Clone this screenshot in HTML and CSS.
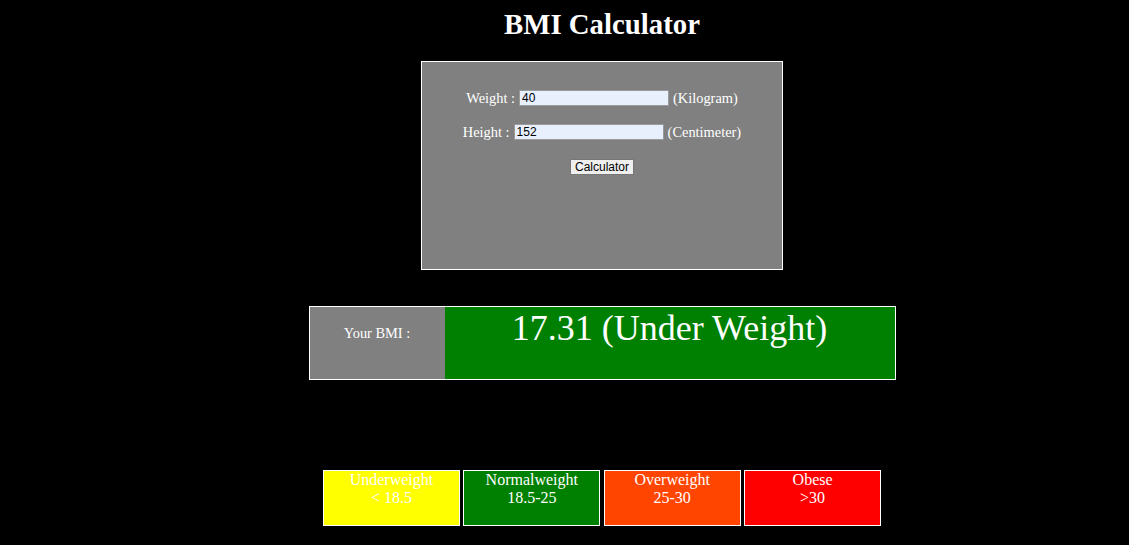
FILE: index.html
```html
<!DOCTYPE html>
<html lang="en">
<head>
<meta charset="utf-8">
<title>BMI Calculator</title>
<link rel="stylesheet" href="styles.css">
</head>
<body>
<main class="page">
  <h1 class="title">BMI Calculator</h1>
  <form class="calc">
    <div class="row">
      <span class="label">Weight :</span>
      <input class="field" type="text" value="40">
      <span class="unit">(Kilogram)</span>
    </div>
    <div class="row">
      <span class="label">Height :</span>
      <input class="field" type="text" value="152">
      <span class="unit">(Centimeter)</span>
    </div>
    <div class="row">
      <button class="btn" type="button">Calculator</button>
    </div>
  </form>
  <section class="result">
    <div class="result-label">Your BMI :</div>
    <div class="result-value">17.31 (Under Weight)</div>
  </section>
  <section class="scale">
    <div class="cat under">Underweight<br>&lt; 18.5</div>
    <div class="cat normal">Normalweight<br>18.5-25</div>
    <div class="cat over">Overweight<br>25-30</div>
    <div class="cat obese">Obese<br>&gt;30</div>
  </section>
</main>
</body>
</html>
```

FILE: styles.css
```css
html, body {
  margin: 0;
  padding: 0;
  background: #000;
}

body {
  font-family: "Liberation Serif", "Times New Roman", serif;
  color: #fff;
  font-size: 14.4px;
}

.page {
  padding-left: 75px;
  display: flex;
  flex-direction: column;
  align-items: center;
}

.title {
  margin: 8px 0 20px;
  font-size: 28.8px;
  font-weight: bold;
  line-height: normal;
}

.calc {
  box-sizing: border-box;
  width: 362px;
  height: 209px;
  background: #808080;
  border: 1px solid #fff;
  padding-top: 28px;
  display: flex;
  flex-direction: column;
  gap: 18px;
}

.row {
  display: flex;
  justify-content: center;
  align-items: center;
  gap: 4px;
  height: 16px;
}

.field {
  box-sizing: border-box;
  width: 150px;
  height: 16px;
  margin: 0;
  padding: 0 2px;
  border: 1px solid #9a9a9a;
  background: #e8f0fe;
  font-family: "Liberation Sans", Arial, sans-serif;
  font-size: 12px;
  color: #000;
}

.btn {
  box-sizing: border-box;
  height: 16px;
  margin: 1px 0 0 0;
  padding: 0 4px;
  border: 1px solid #767676;
  border-radius: 0;
  background: #efefef;
  font-family: "Liberation Sans", Arial, sans-serif;
  font-size: 12px;
  line-height: 12px;
  color: #000;
}

.result {
  margin-top: 36px;
  box-sizing: border-box;
  width: 587px;
  height: 74px;
  border: 1px solid #fff;
  display: flex;
}

.result-label {
  width: 135px;
  background: #808080;
  text-align: center;
  padding-top: 18px;
  box-sizing: border-box;
}

.result-value {
  flex: 1;
  background: #008000;
  text-align: center;
  font-size: 36px;
  line-height: normal;
}

.scale {
  margin-top: 90px;
  display: flex;
  gap: 3.4px;
}

.cat {
  box-sizing: border-box;
  width: 137px;
  height: 56px;
  border: 1px solid #fff;
  text-align: center;
  font-size: 16px;
  line-height: normal;
}

.under { background: #ffff00; }
.normal { background: #008000; }
.over { background: #ff4500; }
.obese { background: #ff0000; }
```
